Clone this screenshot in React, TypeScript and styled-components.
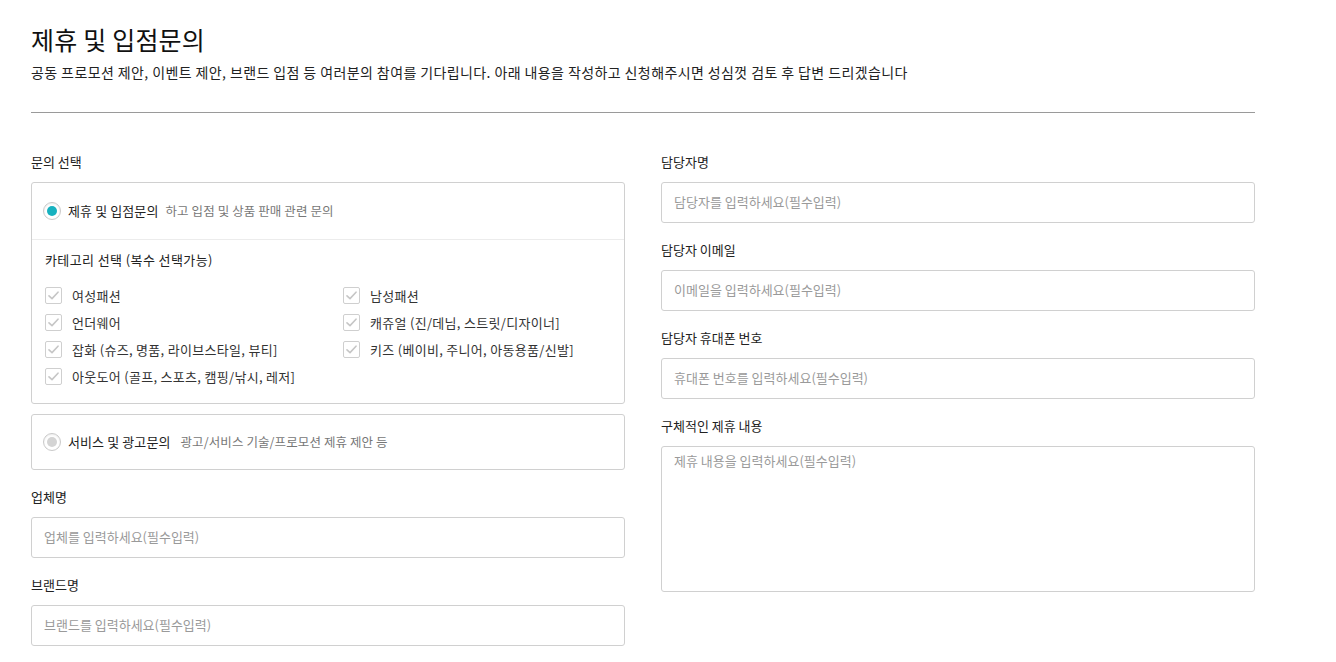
import React from "react";
import styled, { createGlobalStyle } from "styled-components";

const GlobalStyle = createGlobalStyle`
  html, body { margin: 0; padding: 0; background: #fff; }
  body {
    font-family: "Noto Sans CJK KR", "Noto Sans", "Liberation Sans", sans-serif;
    color: #222;
  }
  * { box-sizing: border-box; }
`;

const Page = styled.div`
  width: 1255px;
  padding: 22px 0 0 31px;
`;

const Title = styled.h1`
  margin: 0;
  font-size: 25px;
  line-height: 34px;
  font-weight: 400;
  color: #111;
  letter-spacing: 0.2px;
`;

const Subtitle = styled.p`
  margin: 6px 0 0;
  font-size: 14px;
  line-height: 20px;
  color: #222;
  letter-spacing: 0.4px;
`;

const Divider = styled.hr`
  margin: 30px 0 0;
  border: 0;
  border-top: 1px solid #9a9a9a;
  height: 0;
`;

const Columns = styled.div`
  display: grid;
  grid-template-columns: 594px 594px;
  column-gap: 36px;
  margin-top: 39px;
  align-items: start;
`;

const Column = styled.div`
  display: flex;
  flex-direction: column;
`;

const FieldLabel = styled.div<{ $first?: boolean }>`
  font-size: 13px;
  line-height: 20px;
  color: #222;
  margin-top: ${(p) => (p.$first ? "0" : "17px")};
  margin-bottom: 10px;
`;

const Box = styled.div<{ $gap?: boolean }>`
  border: 1px solid #d0d0d0;
  border-radius: 3px;
  background: #fff;
  margin-top: ${(p) => (p.$gap ? "10px" : "0")};
`;

const RadioRow = styled.label<{ $divided?: boolean; $h: number }>`
  display: flex;
  align-items: center;
  height: ${(p) => p.$h}px;
  padding: 0 11px;
  border-bottom: ${(p) => (p.$divided ? "1px solid #ececec" : "none")};
`;

const RadioCircle = styled.span<{ $on?: boolean }>`
  width: 18px;
  height: 18px;
  border-radius: 50%;
  border: 1px solid #c9c9c9;
  background: #fff;
  box-shadow: inset 0 1px 2px rgba(0, 0, 0, 0.08);
  display: flex;
  align-items: center;
  justify-content: center;
  flex: none;
  &::after {
    content: "";
    width: 10px;
    height: 10px;
    border-radius: 50%;
    background: ${(p) => (p.$on ? "#17b1bf" : "#d4d4d4")};
  }
`;

const RadioTitle = styled.span`
  margin-left: 7px;
  font-size: 13px;
  line-height: 20px;
  color: #222;
  letter-spacing: 0.1px;
`;

const RadioDesc = styled.span<{ $wide?: boolean }>`
  margin-left: ${(p) => (p.$wide ? "10px" : "7px")};
  font-size: 12.5px;
  line-height: 20px;
  color: #777;
  letter-spacing: 0.1px;
`;

const Category = styled.div`
  padding: 10px 13px 13px;
`;

const CategoryTitle = styled.div`
  font-size: 13px;
  line-height: 20px;
  color: #222;
  letter-spacing: 0.4px;
`;

const CheckGrid = styled.div`
  display: grid;
  grid-template-columns: 298px 1fr;
  grid-auto-rows: 27px;
  margin-top: 12px;
`;

const CheckItem = styled.label`
  display: flex;
  align-items: center;
  gap: 10px;
  font-size: 13px;
  color: #333;
  letter-spacing: 0.3px;
`;

const CheckBoxMark = styled.span`
  width: 17px;
  height: 17px;
  border: 1px solid #cfcfcf;
  border-radius: 2px;
  background: #fff;
  display: flex;
  align-items: center;
  justify-content: center;
  flex: none;
`;

const Input = styled.input`
  display: block;
  width: 100%;
  height: 41px;
  border: 1px solid #d0d0d0;
  border-radius: 3px;
  padding: 0 12px 3px;
  font-family: inherit;
  font-size: 13px;
  color: #222;
  outline: none;
  &::placeholder { color: #9a9a9a; }
`;

const TextArea = styled.textarea`
  display: block;
  width: 100%;
  height: 146px;
  border: 1px solid #d0d0d0;
  border-radius: 3px;
  padding: 5px 12px;
  font-family: inherit;
  font-size: 13px;
  line-height: 18px;
  resize: none;
  outline: none;
  &::placeholder { color: #9a9a9a; }
`;

const Check = () => (
  <CheckBoxMark>
    <svg width="11" height="9" viewBox="0 0 11 9">
      <path d="M1 4.8 L4 7.6 L10 1.2" fill="none" stroke="#c6c6c6" strokeWidth="1.6" strokeLinecap="round" strokeLinejoin="round" />
    </svg>
  </CheckBoxMark>
);

const categories = [
  "여성패션",
  "남성패션",
  "언더웨어",
  "캐쥬얼 (진/데님, 스트릿/디자이너]",
  "잡화 (슈즈, 명품, 라이브스타일, 뷰티]",
  "키즈 (베이비, 주니어, 아동용품/신발]",
  "아웃도어 (골프, 스포츠, 캠핑/낚시, 레저]",
];

export default function App() {
  return (
    <>
      <GlobalStyle />
      <Page>
        <Title>제휴 및 입점문의</Title>
        <Subtitle>
          공동 프로모션 제안, 이벤트 제안, 브랜드 입점 등 여러분의 참여를 기다립니다. 아래 내용을 작성하고 신청해주시면 성심껏 검토 후 답변 드리겠습니다
        </Subtitle>
        <Divider />
        <Columns>
          <Column>
            <FieldLabel $first>문의 선택</FieldLabel>
            <Box>
              <RadioRow $divided $h={57}>
                <RadioCircle $on />
                <RadioTitle>제휴 및 입점문의</RadioTitle>
                <RadioDesc>하고 입점 및 상품 판매 관련 문의</RadioDesc>
              </RadioRow>
              <Category>
                <CategoryTitle>카테고리 선택 (복수 선택가능)</CategoryTitle>
                <CheckGrid>
                  {categories.map((c) => (
                    <CheckItem key={c}>
                      <Check />
                      {c}
                    </CheckItem>
                  ))}
                </CheckGrid>
              </Category>
            </Box>
            <Box $gap>
              <RadioRow $h={54}>
                <RadioCircle />
                <RadioTitle>서비스 및 광고문의</RadioTitle>
                <RadioDesc $wide>광고/서비스 기술/프로모션 제휴 제안 등</RadioDesc>
              </RadioRow>
            </Box>
            <FieldLabel>업체명</FieldLabel>
            <Input placeholder="업체를 입력하세요(필수입력)" />
            <FieldLabel>브랜드명</FieldLabel>
            <Input placeholder="브랜드를 입력하세요(필수입력)" />
          </Column>
          <Column>
            <FieldLabel $first>담당자명</FieldLabel>
            <Input placeholder="담당자를 입력하세요(필수입력)" />
            <FieldLabel>담당자 이메일</FieldLabel>
            <Input placeholder="이메일을 입력하세요(필수입력)" />
            <FieldLabel>담당자 휴대폰 번호</FieldLabel>
            <Input placeholder="휴대폰 번호를 입력하세요(필수입력)" />
            <FieldLabel>구체적인 제휴 내용</FieldLabel>
            <TextArea placeholder="제휴 내용을 입력하세요(필수입력)" />
          </Column>
        </Columns>
      </Page>
    </>
  );
}
